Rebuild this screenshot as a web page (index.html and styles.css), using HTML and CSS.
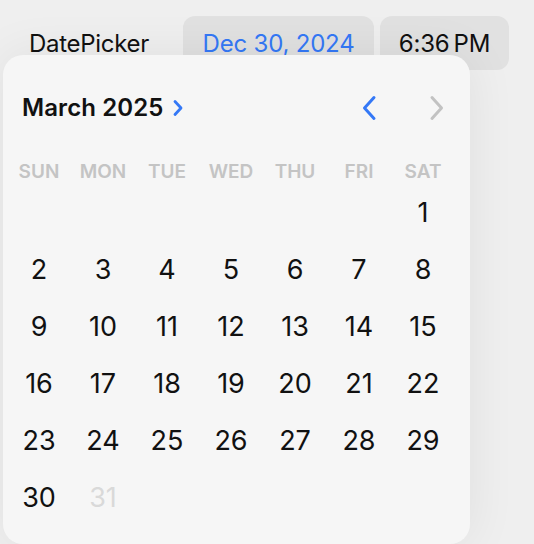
FILE: index.html
```html
<!DOCTYPE html>
<html>
<head>
<meta charset="utf-8">
<link rel="stylesheet" href="styles.css">
</head>
<body>
<div class="row">
  <span class="label">DatePicker</span>
  <button class="pill date">Dec 30, 2024</button>
  <button class="pill time">6:36&#8201;PM</button>
</div>
<div class="card">
  <div class="head">
    <div class="month">March 2025
      <svg class="mchev" width="12" height="18" viewBox="0 0 12 18"><path d="M3 2.5 L9 9 L3 15.5" fill="none" stroke="#3478f6" stroke-width="2.8" stroke-linecap="round" stroke-linejoin="round"/></svg>
    </div>
    <div class="nav">
      <svg width="16" height="26" viewBox="0 0 16 26"><path d="M13 2.5 L3.5 13 L13 23.5" fill="none" stroke="#3478f6" stroke-width="3" stroke-linecap="round" stroke-linejoin="round"/></svg>
      <svg width="16" height="26" viewBox="0 0 16 26"><path d="M3 2.5 L12.5 13 L3 23.5" fill="none" stroke="#c2c2c2" stroke-width="3" stroke-linecap="round" stroke-linejoin="round"/></svg>
    </div>
  </div>
  <div class="grid wk">
    <span>SUN</span><span>MON</span><span>TUE</span><span>WED</span><span>THU</span><span>FRI</span><span>SAT</span>
  </div>
  <div class="grid days">
    <span></span><span></span><span></span><span></span><span></span><span></span><span>1</span>
    <span>2</span><span>3</span><span>4</span><span>5</span><span>6</span><span>7</span><span>8</span>
    <span>9</span><span>10</span><span>11</span><span>12</span><span>13</span><span>14</span><span>15</span>
    <span>16</span><span>17</span><span>18</span><span>19</span><span>20</span><span>21</span><span>22</span>
    <span>23</span><span>24</span><span>25</span><span>26</span><span>27</span><span>28</span><span>29</span>
    <span>30</span><span class="off">31</span>
  </div>
</div>
</body>
</html>
```
FILE: styles.css
```css
html, body {
  margin: 0;
  padding: 0;
  height: 100%;
  overflow: hidden;
}
body {
  background: #efefef;
  font-family: Inter, "Liberation Sans", sans-serif;
  color: #111;
  position: relative;
}
.row {
  display: flex;
  align-items: center;
  padding-top: 16px;
}
.label {
  font-size: 24px;
  margin-left: 29px;
  width: 154px;
  letter-spacing: -0.3px;
}
.pill {
  border: none;
  background: #e1e1e1;
  height: 54px;
  border-radius: 12px;
  font-family: inherit;
  font-size: 24px;
  padding: 0;
  letter-spacing: -0.2px;
}
.date {
  width: 191px;
  color: #3478f6;
}
.time {
  width: 129px;
  margin-left: 6px;
  color: #111;
}
.card {
  position: absolute;
  left: 3px;
  top: 55px;
  width: 467px;
  height: 489px;
  background: #f6f6f6;
  border-radius: 20px;
  box-shadow: 0 0 50px rgba(0, 0, 0, 0.07);
}
.head {
  height: 105px;
  display: flex;
  align-items: center;
  justify-content: space-between;
  padding: 0 25px 0 19px;
}
.month {
  font-size: 24px;
  font-weight: 600;
  display: flex;
  align-items: center;
  letter-spacing: 0.1px;
}
.mchev {
  margin-left: 9px;
}
.nav {
  display: flex;
  gap: 52px;
  align-items: center;
}
.grid {
  display: grid;
  grid-template-columns: repeat(7, 64px);
  margin-left: 4px;
}
.grid span {
  text-align: center;
}
.wk {
  height: 22px;
  align-items: center;
  font-size: 19px;
  font-weight: 600;
  color: #c4c4c4;
}
.days {
  margin-top: 2px;
  grid-auto-rows: 57px;
  align-items: center;
  font-size: 27px;
}
.days .off {
  color: #d9d9d9;
}
```
